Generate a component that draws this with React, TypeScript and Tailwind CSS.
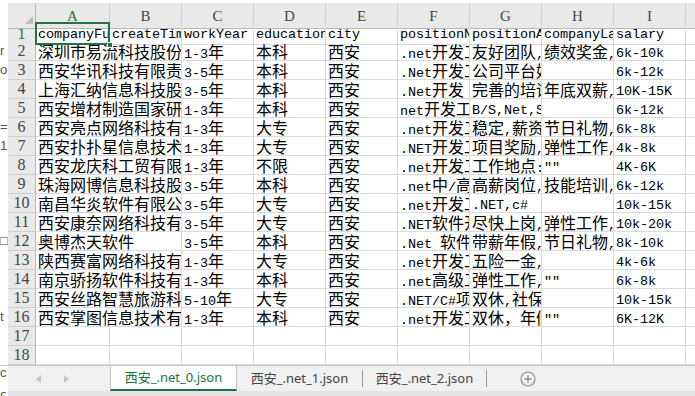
import React from "react";

const CJK = /([\u2E80-\u9FFF\u3000-\u303F\uFF00-\uFFEF]+)/;

// SimSun-like mix: CJK at full width, latin at half width
function Txt({ s }: { s: string }) {
  return (
    <>
      {s.split(CJK).map((p, i) =>
        !p ? null : i % 2 === 1 ? (
          <span key={i} className="font-['Noto_Sans_CJK_SC',sans-serif] text-[16px]">
            {p}
          </span>
        ) : (
          <span key={i} className="font-['Liberation_Mono',monospace] text-[13.5px] tracking-[-0.1px]">
            {p}
          </span>
        )
      )}
    </>
  );
}

const letters = ["A", "B", "C", "D", "E", "F", "G", "H", "I"];

const head = [
  "companyFullName",
  "createTime",
  "workYear",
  "education",
  "city",
  "positionName",
  "positionAdvantage",
  "companyLabelList",
  "salary",
];

type Row = (string | null)[];

const rows: Row[] = [
  ["深圳市易流科技股份有限公司", null, "1-3年", "本科", "西安", ".net开发工程师", "友好团队,技术氛围", "绩效奖金,专项奖金", "6k-10k"],
  ["西安华讯科技有限责任公司", null, "3-5年", "本科", "西安", ".Net开发工程师", "公司平台好", "", "6k-12k"],
  ["上海汇纳信息科技股份有限公司", null, "3-5年", "本科", "西安", ".Net开发 工程师", "完善的培训", "年底双薪,绩效奖金", "10K-15K"],
  ["西安增材制造国家研究院有限公司", null, "1-3年", "本科", "西安", "net开发工程师", "B/S,Net,SQL", "", "6k-12k"],
  ["西安亮点网络科技有限公司", null, "1-3年", "大专", "西安", ".net开发工程师", "稳定,薪资高", "节日礼物,带薪年假", "6k-8k"],
  ["西安扑扑星信息技术有限公司", null, "1-3年", "大专", "西安", ".NET开发工程师", "项目奖励,五险一金", "弹性工作,定期体检", "4k-8k"],
  ["西安龙庆科工贸有限公司", null, "1-3年", "不限", "西安", ".net开发工程师", "工作地点:", '""', "4K-6K"],
  ["珠海网博信息科技股份有限公司", null, "3-5年", "本科", "西安", ".net中/高级工程师", "高薪岗位,发展空间", "技能培训,节日礼物", "6k-12k"],
  ["南昌华炎软件有限公司", null, "3-5年", "大专", "西安", ".net开发工程师", ".NET,c#", "", "10k-15k"],
  ["西安康奈网络科技有限公司", null, "3-5年", "大专", "西安", ".NET软件开发工程师", "尽快上岗,五险一金", "弹性工作,节日礼物", "10k-20k"],
  ["奥博杰天软件", null, "3-5年", "本科", "西安", ".Net 软件开发", "带薪年假,五险一金", "节日礼物,年度旅游", "8k-10k"],
  ["陕西赛富网络科技有限公司", null, "1-3年", "大专", "西安", ".net开发工程师", "五险一金,", "", "4k-6k"],
  ["南京骄扬软件科技有限公司", null, "1-3年", "本科", "西安", ".net高级工程师", "弹性工作,", '""', "6k-8k"],
  ["西安丝路智慧旅游科技有限公司", null, "5-10年", "大专", "西安", ".NET/C#项目经理", "双休,社保", "", "10k-15k"],
  ["西安掌图信息技术有限公司", null, "1-3年", "本科", "西安", ".net开发工程师", "双休，年假", '""', "6K-12K"],
];

// bits of the window behind, cut off at the left edge
const edge: Record<number, string> = { 2: "r", 3: "o.", 6: "=", 7: "1", 12: "□", 16: "t" };

const gridCols = "grid grid-cols-[8px_28px_74px_repeat(8,72px)_1fr]";

function EdgeCell({ n }: { n: number }) {
  return (
    <div className="overflow-hidden whitespace-nowrap bg-white font-['Liberation_Sans',sans-serif] text-[13px] leading-[18px] text-[#555]">
      {edge[n] ?? ""}
    </div>
  );
}

function RowHead({ n, active }: { n: number; active?: boolean }) {
  return (
    <div
      className={
        "flex items-center justify-center border-r border-b border-r-[#b8b8b8] border-b-[#cfcfcf] bg-[#e9e9e9] font-['Liberation_Serif',serif] text-[16px] leading-[18px] " +
        (active ? "text-[#217346]" : "text-[#444]")
      }
    >
      {n}
    </div>
  );
}

function Cell({ s, span }: { s: string; span?: boolean }) {
  return (
    <div
      className={
        "overflow-hidden whitespace-nowrap border-r border-b border-[#dadada] pl-[2px] leading-[18px] text-black " +
        (span ? "col-span-2" : "")
      }
    >
      <Txt s={s} />
    </div>
  );
}

function Sheet() {
  return (
    <div>
      <div className="h-[3px] bg-white" />
      {/* column letters */}
      <div className={gridCols + " h-[20px]"}>
        <div className="bg-white" />
        <div className="relative border-r border-b border-[#b8b8b8] bg-[#e9e9e9]">
          <svg className="absolute right-[2px] bottom-[4px]" width="8" height="8" viewBox="0 0 8 8">
            <path d="M8 0 L8 8 L0 8 Z" fill="#bdbdbd" />
          </svg>
        </div>
        {letters.map((l, i) => (
          <div
            key={l}
            className={
              "flex items-center justify-center border-r border-b border-r-[#cfcfcf] border-b-[#b8b8b8] bg-[#e9e9e9] pt-[2px] font-['Liberation_Serif',serif] text-[15px] " +
              (i === 0 ? "text-[#217346]" : "text-[#444]")
            }
          >
            {l}
          </div>
        ))}
        <div className="border-b border-[#b8b8b8] bg-[#e9e9e9]" />
      </div>

      {/* header row 1 */}
      <div className={gridCols + " h-[19px]"}>
        <EdgeCell n={1} />
        <RowHead n={1} active />
        {head.map((h, i) =>
          i === 0 ? (
            <div
              key={h}
              className="relative whitespace-nowrap border-r border-b border-[#dadada] pl-[2px] leading-[18px]"
            >
              <div className="overflow-hidden">
                <Txt s={h} />
              </div>
              <div className="absolute -top-[1px] -left-[1px] -right-[1px] -bottom-[1px] border-2 border-[#217346]" />
              <div className="absolute -right-[4px] -bottom-[4px] h-[6px] w-[6px] border border-white bg-[#217346]" />
            </div>
          ) : (
            <Cell key={h} s={h} />
          )
        )}
        <div className="border-b border-[#dadada]" />
      </div>

      {rows.map((r, ri) => (
        <div key={ri} className={gridCols + " h-[19px]"}>
          <EdgeCell n={ri + 2} />
          <RowHead n={ri + 2} />
          {r.map((v, ci) =>
            v === null ? null : <Cell key={ci} s={v} span={ci === 0 && r[1] === null} />
          )}
          <div className="border-b border-[#dadada]" />
        </div>
      ))}

      {[17, 18].map((n) => (
        <div key={n} className={gridCols + " h-[19px]"}>
          <EdgeCell n={n} />
          <RowHead n={n} />
          {letters.map((l) => (
            <Cell key={l} s="" />
          ))}
          <div className="border-b border-[#dadada]" />
        </div>
      ))}
    </div>
  );
}

function Tabs() {
  return (
    <div>
      <div className="flex h-[26px] border-t border-[#c6c6c6] bg-[#f0f0f0] font-['Noto_Sans','Noto_Sans_CJK_SC',sans-serif] text-[13px] text-[#444]">
        <div className="w-[8px] overflow-hidden bg-white font-['Liberation_Sans',sans-serif] text-[13px] leading-[14px] text-[#555]">
          c
        </div>
        <div className="flex w-[102px] items-center gap-[23px] pl-[28px]">
          <svg width="5" height="8" viewBox="0 0 5 8">
            <path d="M5 0 L0 4 L5 8 Z" fill="#c4c4c4" />
          </svg>
          <svg width="5" height="8" viewBox="0 0 5 8">
            <path d="M0 0 L5 4 L0 8 Z" fill="#c4c4c4" />
          </svg>
        </div>
        <div className="flex w-[127px] items-center justify-center border-x border-b-2 border-x-[#c6c6c6] border-b-[#217346] bg-white text-[#217346]">
          西安_.net_0.json
        </div>
        <div className="flex w-[125px] items-center justify-center">西安_.net_1.json</div>
        <div className="my-[4px] w-px bg-[#9a9a9a]" />
        <div className="flex w-[123px] items-center justify-center">西安_.net_2.json</div>
        <div className="my-[4px] w-px bg-[#9a9a9a]" />
        <div className="flex items-center pl-[33px]">
          <svg width="16" height="16" viewBox="0 0 16 16">
            <circle cx="8" cy="8" r="7" fill="none" stroke="#8c8c8c" strokeWidth="1.2" />
            <path d="M8 4.5 V11.5 M4.5 8 H11.5" stroke="#8c8c8c" strokeWidth="1.4" />
          </svg>
        </div>
      </div>
      <div className="flex h-[5px] bg-[#e4e4e4]">
        <div className="w-[8px] overflow-hidden bg-white text-[13px] leading-[6px] text-[#555]">c</div>
      </div>
    </div>
  );
}

export default function App() {
  return (
    <div className="h-[396px] w-[695px] overflow-hidden bg-white">
      <Sheet />
      <Tabs />
    </div>
  );
}
